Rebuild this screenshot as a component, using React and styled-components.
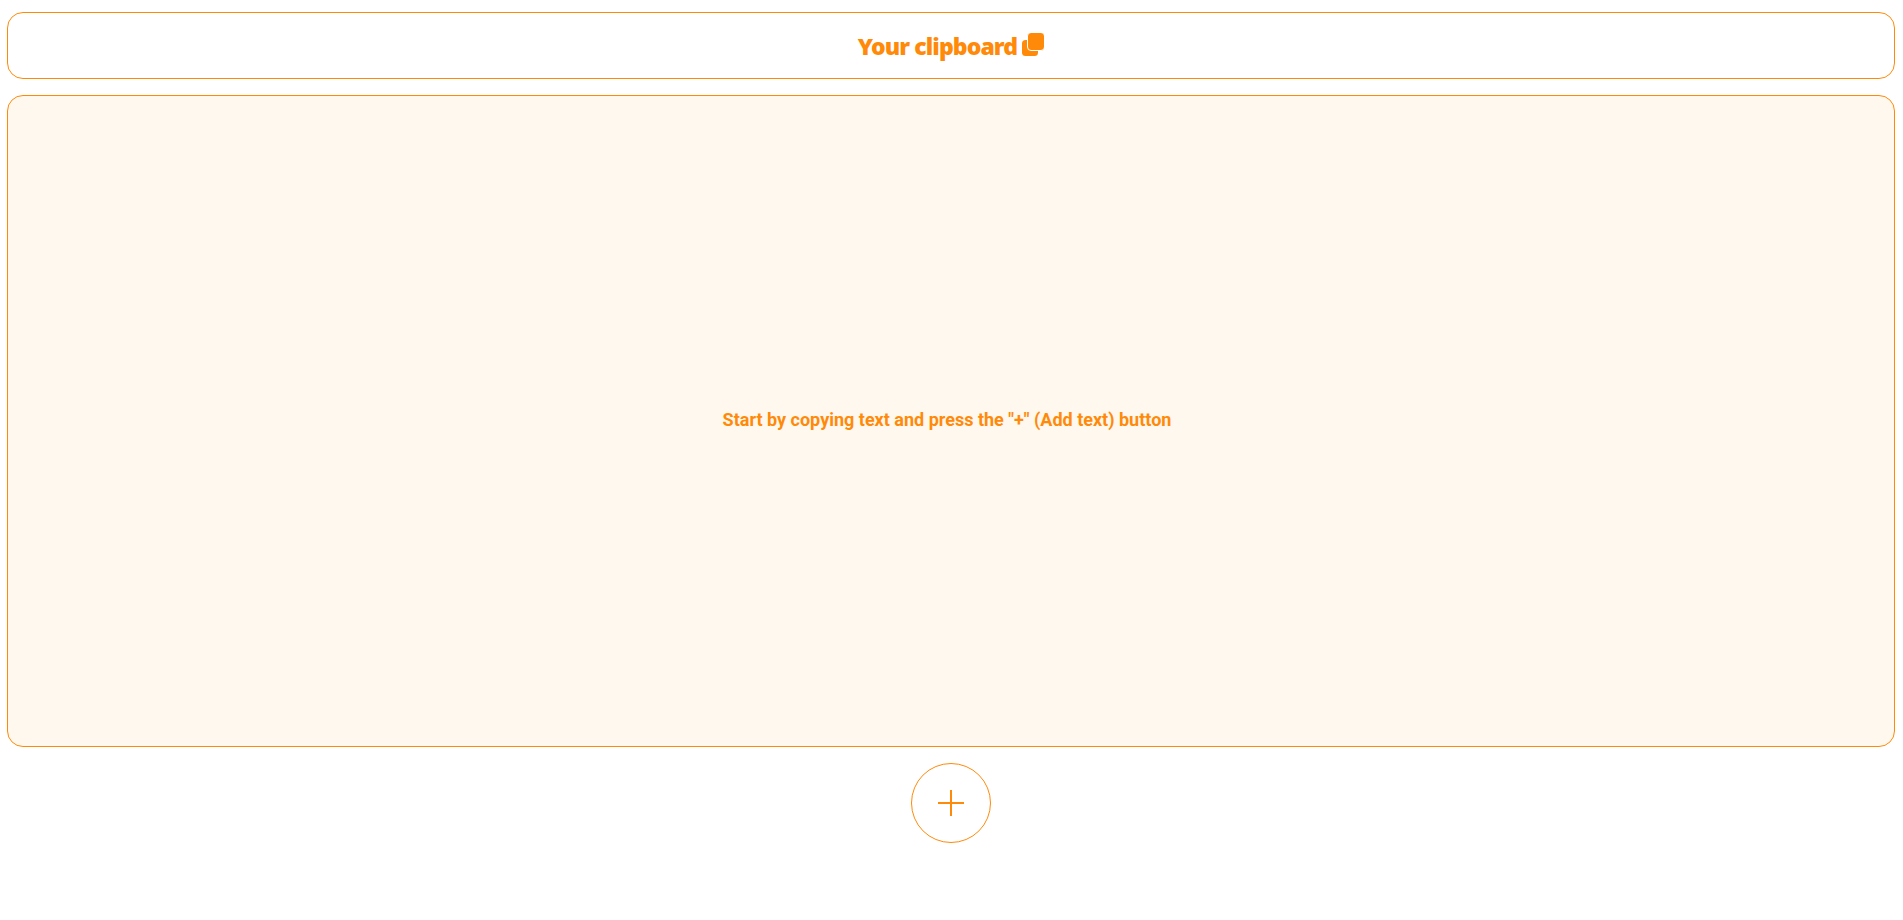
import React from 'react'
import styled, { createGlobalStyle } from 'styled-components'

const orange = '#ff8a0a'

const GlobalStyle = createGlobalStyle`
  html, body {
    margin: 0;
    padding: 0;
    background: #fff;
  }
`

const Page = styled.div`
  display: flex;
  flex-direction: column;
  align-items: center;
  gap: 16px;
  height: 920px;
  padding: 12px 8px 0 7px;
  box-sizing: border-box;
  overflow: hidden;
`

const Header = styled.header`
  display: flex;
  justify-content: center;
  align-items: center;
  gap: 5px;
  width: 100%;
  height: 67px;
  flex-shrink: 0;
  box-sizing: border-box;
  border: 1px solid ${orange};
  border-radius: 16px;
`

const Title = styled.h1`
  margin: 0;
  color: ${orange};
  font-family: 'Noto Sans', sans-serif;
  font-size: 23px;
  font-weight: 900;
  letter-spacing: -0.9px;
`

const IconWrap = styled.span`
  display: flex;
  margin-bottom: 2px;
`

const ClipList = styled.main`
  display: flex;
  justify-content: center;
  align-items: center;
  width: 100%;
  height: 652px;
  flex-shrink: 0;
  padding-bottom: 4px;
  box-sizing: border-box;
  background: #fff8ee;
  border: 1px solid ${orange};
  border-radius: 16px;
`

const Hint = styled.p`
  margin: 0 8px 0 0;
  color: ${orange};
  font-family: 'Roboto', sans-serif;
  font-size: 18px;
  font-weight: 700;
`

const AddButton = styled.button`
  display: flex;
  justify-content: center;
  align-items: center;
  width: 80px;
  height: 80px;
  flex-shrink: 0;
  padding: 0;
  background: #fff;
  border: 1px solid ${orange};
  border-radius: 50%;
  cursor: pointer;
`

const CopyIcon = () => (
  <svg width="22" height="23" viewBox="0 0 22 23" aria-hidden="true">
    <rect x="0" y="7" width="16" height="16" rx="3.5" fill={orange} />
    <rect x="5.5" y="-0.5" width="17" height="18" rx="3.5" fill={orange} stroke="#fff" strokeWidth="1" />
  </svg>
)

const PlusIcon = () => (
  <svg width="26" height="26" viewBox="0 0 26 26" aria-hidden="true">
    <path d="M13 0v26M0 13h26" stroke={orange} strokeWidth="2" fill="none" />
  </svg>
)

const App = () => {
  return (
    <>
      <GlobalStyle />
      <Page>
        <Header>
          <Title>Your clipboard</Title>
          <IconWrap>
            <CopyIcon />
          </IconWrap>
        </Header>
        <ClipList>
          <Hint>Start by copying text and press the "+" (Add text) button</Hint>
        </ClipList>
        <AddButton aria-label="Add text">
          <PlusIcon />
        </AddButton>
      </Page>
    </>
  )
}

export default App
